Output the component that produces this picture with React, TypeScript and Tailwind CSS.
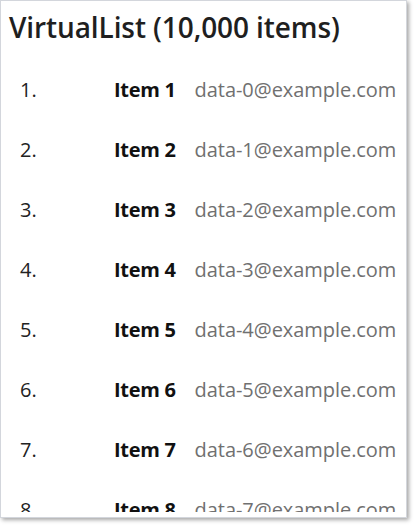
import React from 'react';

const items = Array.from({ length: 10 }, (_, i) => ({
  id: i + 1,
  name: `Item ${i + 1}`,
  email: `data-${i}@example.com`,
}));

export default function App() {
  return (
    <div className="w-[415px] h-[528px] bg-white" style={{ fontFamily: '"Open Sans", "Noto Sans", sans-serif' }}>
      <div className="w-[407px] h-[518px] bg-white border border-[#d3d6dc] shadow-[2px_2px_4px_rgba(0,0,0,0.35)] flex flex-col overflow-hidden">
        {/* header */}
        <div className="h-[59px] flex items-center pl-2 pb-2">
          <h1 className="text-[28px] font-semibold text-[#1f1f1f] tracking-[-0.1px]">VirtualList (10,000 items)</h1>
        </div>

        {/* list */}
        <div className="h-[452px] overflow-hidden">
          {items.map((item) => (
            <div key={item.id} className="h-[60px] flex items-center text-[20px]">
              <span className="w-[113px] pl-[19px] text-[#222]">{item.id}.</span>
              <span className="font-bold text-[#111] tracking-[-0.3px]">{item.name}</span>
              <span className="ml-[19px] text-[#707070] tracking-[-0.05px]">{item.email}</span>
            </div>
          ))}
        </div>
      </div>
    </div>
  );
}
